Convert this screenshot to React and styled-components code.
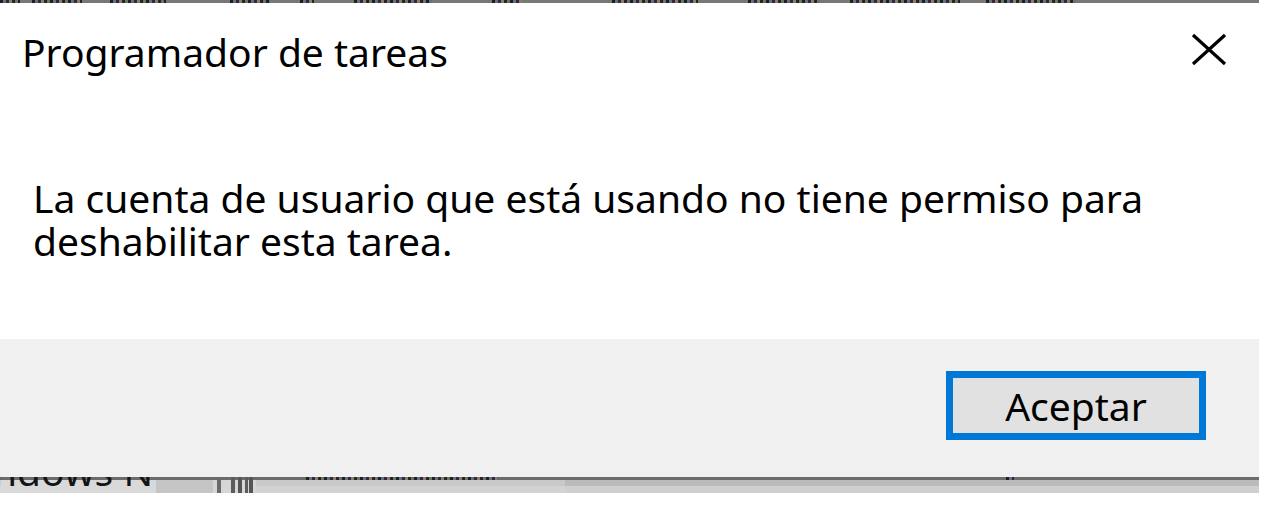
import React from "react";
import styled, { createGlobalStyle } from "styled-components";

const GlobalStyle = createGlobalStyle`
  html, body {
    margin: 0;
    padding: 0;
    background: #ffffff;
  }
  body {
    font-family: "Noto Sans", "Open Sans", "DejaVu Sans", sans-serif;
  }
`;

const Screen = styled.div`
  width: 1274px;
  height: 508px;
  overflow: hidden;
  background: #ffffff;
  display: flex;
  flex-direction: column;
`;

/* strip of the window behind the dialog, above it */
const TopEdge = styled.div`
  width: 1259px;
  height: 3px;
  flex-shrink: 0;
  display: flex;
  background: #787878;
`;

const Speckle = styled.span`
  display: block;
  flex-shrink: 0;
  width: ${(p) => p.$w}px;
  height: 3px;
  margin-left: ${(p) => p.$ml || 0}px;
  background: repeating-linear-gradient(
    90deg,
    #1f1f1f 0 3px,
    #5e7385 3px 6px,
    #3a2340 6px 9px,
    #8a7f6a 9px 12px,
    #262626 12px 15px,
    #6f6f6f 15px 18px
  );
`;

const Dialog = styled.section`
  width: 1259px;
  height: 474px;
  flex-shrink: 0;
  background: #ffffff;
  display: flex;
  flex-direction: column;
`;

const Content = styled.div`
  flex: 1;
  display: flex;
  flex-direction: column;
`;

const Header = styled.header`
  display: flex;
  justify-content: space-between;
  align-items: flex-start;
  padding: 27px 32px 0 22px;
`;

const Title = styled.h1`
  margin: 0;
  font-size: 39px;
  font-weight: 400;
  line-height: 43px;
  color: #000000;
`;

const CloseButton = styled.button`
  margin-top: 3px;
  width: 36px;
  height: 33px;
  padding: 0;
  border: 0;
  background: transparent;
  display: flex;
  cursor: pointer;
`;

const Message = styled.p`
  margin: 103px 0 0;
  padding: 0 20px 0 33px;
  font-size: 39px;
  line-height: 43px;
  color: #000000;
`;

const Footer = styled.footer`
  height: 138px;
  box-sizing: border-box;
  background: #f0f0f0;
  display: flex;
  justify-content: flex-end;
  align-items: flex-start;
  padding: 32px 53px 0 0;
`;

const PrimaryButton = styled.button`
  width: 260px;
  height: 69px;
  box-sizing: border-box;
  padding: 0;
  border: 7px solid #0078d7;
  background: #e1e1e1;
  font-family: inherit;
  font-size: 39px;
  line-height: 55px;
  color: #000000;
  cursor: pointer;
`;

/* window behind the dialog, visible below it */
const BackRow = styled.div`
  width: 1259px;
  height: 16px;
  flex-shrink: 0;
  display: flex;
`;

const BackCell = styled.div`
  width: ${(p) => p.$w}px;
  height: 16px;
  flex-shrink: 0;
  display: flex;
  align-items: flex-start;
  overflow: hidden;
  background: linear-gradient(
    to bottom,
    #6b6b6b 0 3px,
    ${(p) => p.$top} 3px 9px,
    ${(p) => p.$bottom} 9px 16px
  );
`;

const CutText = styled.span`
  display: block;
  margin: -28px 0 0 -7px;
  font-size: 39px;
  line-height: 43px;
  white-space: nowrap;
  color: #141414;
`;

const GripBar = styled.span`
  display: block;
  flex-shrink: 0;
  width: ${(p) => p.$w}px;
  height: 16px;
  margin-left: ${(p) => p.$ml}px;
  background: ${(p) => p.$c || "#6a6a6a"};
`;

const CloseIcon = () => (
  <svg width="36" height="33" viewBox="0 0 36 33" aria-hidden="true">
    <path
      d="M2 2 L34 31 M34 2 L2 31"
      stroke="#000"
      strokeWidth="3.2"
      fill="none"
    />
  </svg>
);

export default function App() {
  return (
    <>
      <GlobalStyle />
      <Screen>
        <TopEdge>
          <Speckle $w={20} />
          <Speckle $w={50} $ml={12} />
          <Speckle $w={56} $ml={28} />
          <Speckle $w={40} $ml={64} />
          <Speckle $w={14} $ml={30} />
          <Speckle $w={78} $ml={40} />
          <Speckle $w={30} $ml={60} />
          <Speckle $w={86} $ml={90} />
          <Speckle $w={72} $ml={50} />
          <Speckle $w={110} $ml={30} />
          <Speckle $w={90} $ml={26} />
        </TopEdge>
        <Dialog>
          <Content>
            <Header>
              <Title>Programador de tareas</Title>
              <CloseButton aria-label="Cerrar">
                <CloseIcon />
              </CloseButton>
            </Header>
            <Message>
              La cuenta de usuario que está usando no tiene permiso para
              deshabilitar esta tarea.
            </Message>
          </Content>
          <Footer>
            <PrimaryButton>Aceptar</PrimaryButton>
          </Footer>
        </Dialog>
        <BackRow>
          <BackCell $w={156} $top="#d9d9d9" $bottom="#d9d9d9">
            <CutText>ndows N</CutText>
          </BackCell>
          <BackCell $w={57} $top="#c5c5c5" $bottom="#c5c5c5" />
          <BackCell $w={43} $top="#d6d6d6" $bottom="#d6d6d6">
            <GripBar $w={4} $ml={4} />
            <GripBar $w={4} $ml={10} $c="#5c5c5c" />
            <GripBar $w={4} $ml={3} $c="#555555" />
            <GripBar $w={3} $ml={3} $c="#5c5c5c" />
            <GripBar $w={4} $ml={1} $c="#555555" />
          </BackCell>
          <BackCell $w={309} $top="#c9c9c9" $bottom="#d3d3d3">
            <Speckle $w={191} $ml={50} />
          </BackCell>
          <BackCell $w={694} $top="#bbbbbb" $bottom="#cfcfcf">
            <Speckle $w={8} $ml={441} />
          </BackCell>
        </BackRow>
      </Screen>
    </>
  );
}
